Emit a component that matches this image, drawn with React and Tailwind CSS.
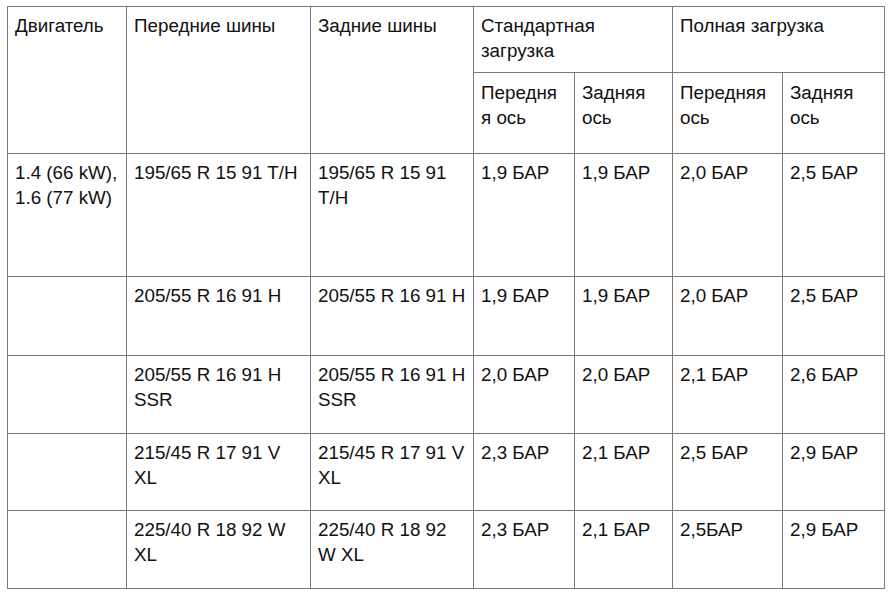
import React from "react";

const cell = "bg-white whitespace-nowrap pl-[7px] pr-[4px] pt-[7px] text-[18.8px] leading-[24.5px] text-[#111]";

const rows = [
  { c: [["1.4 (66 kW),", "1.6 (77 kW)"], ["195/65 R 15 91 T/H"], ["195/65 R 15 91", "T/H"], ["1,9 БАР"], ["1,9 БАР"], ["2,0 БАР"], ["2,5 БАР"]] },
  { c: [[""], ["205/55 R 16 91 H"], ["205/55 R 16 91 H"], ["1,9 БАР"], ["1,9 БАР"], ["2,0 БАР"], ["2,5 БАР"]] },
  { c: [[""], ["205/55 R 16 91 H", "SSR"], ["205/55 R 16 91 H", "SSR"], ["2,0 БАР"], ["2,0 БАР"], ["2,1 БАР"], ["2,6 БАР"]] },
  { c: [[""], ["215/45 R 17 91 V", "XL"], ["215/45 R 17 91 V", "XL"], ["2,3 БАР"], ["2,1 БАР"], ["2,5 БАР"], ["2,9 БАР"]] },
  { c: [[""], ["225/40 R 18 92 W", "XL"], ["225/40 R 18 92", "W XL"], ["2,3 БАР"], ["2,1 БАР"], ["2,5БАР"], ["2,9 БАР"]] },
];

function Lines({ lines }) {
  return lines.map((l, i) => (
    <React.Fragment key={i}>
      {i > 0 && <br />}
      {l}
    </React.Fragment>
  ));
}

export default function App() {
  return (
    <div className="w-[896px] h-[594px] bg-white pl-[7px] pt-[6px]" style={{ fontFamily: '"Liberation Sans", Arial, sans-serif' }}>
      <div className="inline-grid grid-cols-[118px_183px_162px_100px_97px_109px_101px] grid-rows-[65px_80px_122px_78px_77px_76px_77px] gap-px bg-[#7a7a7a] p-px">
        <div className={`${cell} row-span-2`}>Двигатель</div>
        <div className={`${cell} row-span-2`}>Передние шины</div>
        <div className={`${cell} row-span-2`}>Задние шины</div>
        <div className={`${cell} col-span-2`}>Стандартная<br />загрузка</div>
        <div className={`${cell} col-span-2`}>Полная загрузка</div>
        <div className={`${cell} pt-[8px]`}>Передня<br />я ось</div>
        <div className={`${cell} pt-[8px]`}>Задняя<br />ось</div>
        <div className={`${cell} pt-[8px]`}>Передняя<br />ось</div>
        <div className={`${cell} pt-[8px]`}>Задняя<br />ось</div>
        {rows.map((r, ri) =>
          r.c.map((lines, ci) => (
            <div key={`${ri}-${ci}`} className={cell}>
              <Lines lines={lines} />
            </div>
          ))
        )}
      </div>
    </div>
  );
}
